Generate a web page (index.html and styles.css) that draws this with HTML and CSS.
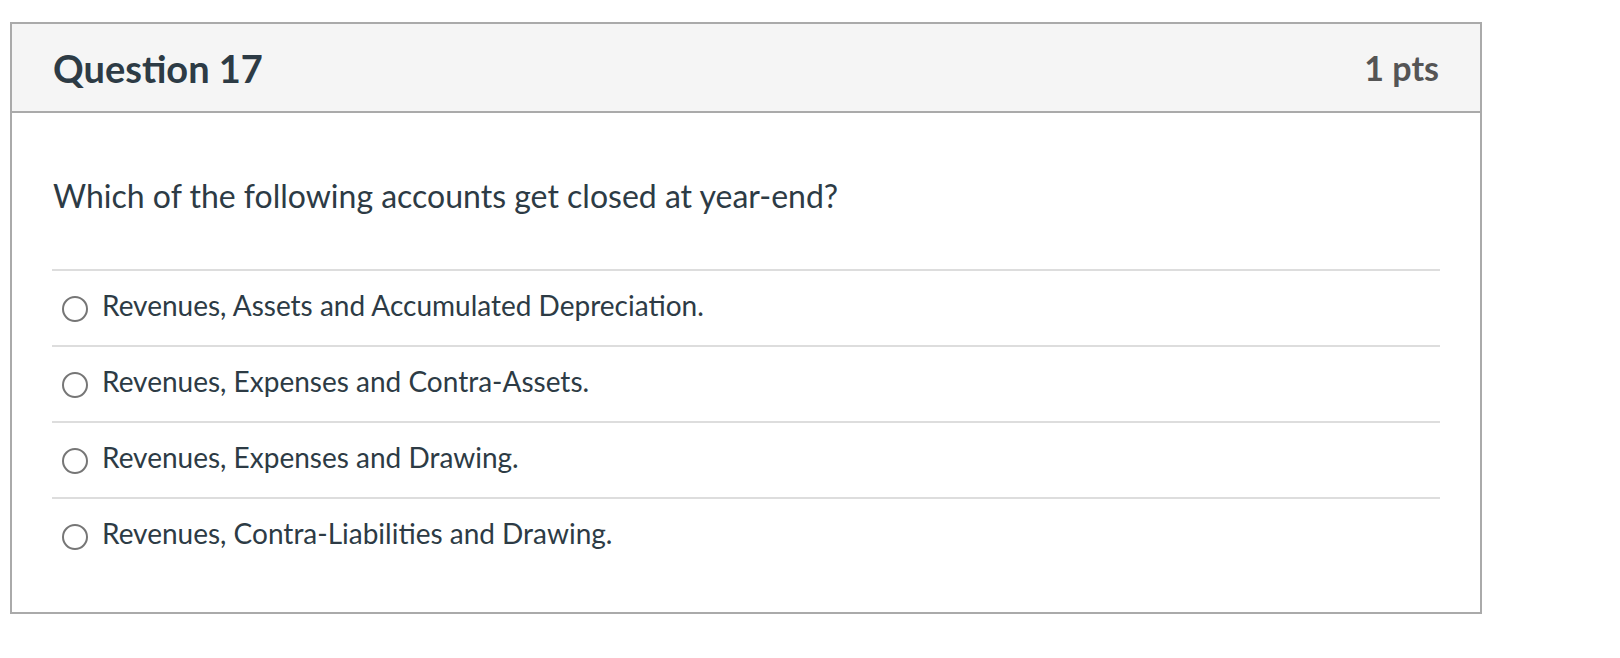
FILE: index.html
```html
<!DOCTYPE html>
<html>
<head>
<meta charset="utf-8">
<link rel="stylesheet" href="styles.css">
</head>
<body>
<div class="question">
  <div class="q-header">
    <h2 class="q-title">Question 17</h2>
    <span class="q-points">1 pts</span>
  </div>
  <div class="q-body">
    <p class="q-text">Which of the following accounts get closed at year-end?</p>
    <div class="answers">
      <label class="answer"><span class="radio"></span><span class="answer-text">Revenues, Assets and Accumulated Depreciation.</span></label>
      <label class="answer"><span class="radio"></span><span class="answer-text">Revenues, Expenses and Contra-Assets.</span></label>
      <label class="answer"><span class="radio"></span><span class="answer-text">Revenues, Expenses and Drawing.</span></label>
      <label class="answer"><span class="radio"></span><span class="answer-text">Revenues, Contra-Liabilities and Drawing.</span></label>
    </div>
  </div>
</div>
</body>
</html>
```

FILE: styles.css
```css
* { box-sizing: border-box; }
html, body { margin: 0; padding: 0; background: #ffffff; }
body {
  font-family: Lato, "Liberation Sans", sans-serif;
  color: #2d3b45;
  padding: 22px 0 0 10px;
}
.question {
  width: 1472px;
  height: 592px;
  border: 2px solid #aaaaaa;
  background: #ffffff;
}
.q-header {
  display: flex;
  justify-content: space-between;
  align-items: center;
  height: 89px;
  padding: 0 41px;
  background: #f5f5f5;
  border-bottom: 2px solid #aaaaaa;
}
.q-title {
  margin: 0;
  font-size: 38px;
  line-height: 48px;
  font-weight: 700;
  color: #2d3b45;
}
.q-points {
  font-size: 34px;
  line-height: 48px;
  font-weight: 700;
  color: #555555;
}
.q-body {
  padding: 63px 40px 40px 40px;
}
.q-text {
  margin: 0 0 53px 1px;
  font-size: 32px;
  line-height: 40px;
}
.answers {
  display: flex;
  flex-direction: column;
}
.answer {
  display: flex;
  align-items: center;
  height: 76px;
  padding: 16px 0 22px 10px;
  border-top: 2px solid #dddddd;
  font-size: 28px;
  line-height: 36px;
}
.radio {
  flex: none;
  width: 26px;
  height: 26px;
  margin-top: 8px;
  margin-right: 14px;
  border: 2px solid #767676;
  border-radius: 50%;
  background: #ffffff;
}
.answer-text { white-space: nowrap; }
```
